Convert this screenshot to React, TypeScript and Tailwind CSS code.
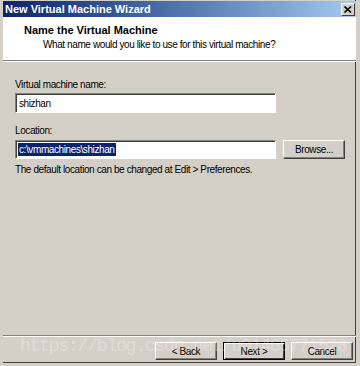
export default function App() {
  const font = { fontFamily: '"Liberation Sans", Arial, sans-serif' };
  const raised =
    "flex items-center justify-center border border-t-white border-l-white border-r-[#404040] border-b-[#404040] shadow-[inset_-1px_-1px_0_#808080]";
  const sunken =
    "bg-white border border-t-[#808080] border-l-[#808080] border-b-white border-r-white shadow-[inset_1px_1px_0_#404040] flex items-center";
  return (
    <div
      className="relative w-[360px] h-[366px] bg-[#d4d0c8] border-l-[3px] border-r-[4px] border-b-[3px] border-[#d4d0c8] shadow-[inset_-1px_-1px_0_#404040] flex flex-col text-[10px] tracking-[-0.4px] text-black overflow-hidden"
      style={font}
    >
      {/* title bar */}
      <div className="h-[16px] mt-[1px] flex items-center justify-between bg-gradient-to-r from-[#0a246a] to-[#a6caf0] pl-[2px] pr-[1px]">
        <span className="text-white font-bold text-[11px] tracking-normal leading-none">New Virtual Machine Wizard</span>
        <div className="w-[14px] h-[13px] bg-[#d4d0c8] border border-t-white border-l-white border-r-[#404040] border-b-[#404040] flex items-center justify-center">
          <svg width="8" height="7" viewBox="0 0 8 7">
            <path d="M0.5 0.5 L7 6.5 M7 0.5 L0.5 6.5" stroke="#000" strokeWidth="1.6" />
          </svg>
        </div>
      </div>

      {/* header */}
      <div className="h-[44px] bg-white border-b border-[#808080] shadow-[0_1px_0_#fff] pl-[21px] pt-[6px]">
        <div className="font-bold text-[11px] tracking-normal leading-[14px]">Name the Virtual Machine</div>
        <div className="pl-[19px] leading-[14px] mt-[1px]">What name would you like to use for this virtual machine?</div>
      </div>

      {/* body */}
      <div className="flex-1 flex flex-col pl-[12px] pt-[17px]">
        <div className="leading-[13px] mb-[2px]">Virtual machine name:</div>
        <div className={`w-[261px] h-[20px] pl-[3px] ${sunken}`}>shizhan</div>
        <div className="leading-[13px] mt-[11px] mb-[3px]">Location:</div>
        <div className="flex items-center gap-[7px]">
          <div className={`w-[261px] h-[19px] pl-[2px] ${sunken}`}>
            <span className="bg-[#0a246a] text-white leading-[13px] px-[1px]">c:\vmmachines\shizhan</span>
          </div>
          <div className={`w-[62px] h-[19px] ${raised}`}>Browse...</div>
        </div>
        <div className="mt-[4px] leading-[13px]">The default location can be changed at Edit &gt; Preferences.</div>
      </div>

      {/* footer */}
      <div className="h-[28px] border-t border-[#808080] shadow-[inset_0_1px_0_#fff] flex items-start justify-end pr-[3px] pt-[6px] gap-[6px]">
        <div className={`w-[62px] h-[18px] ${raised}`}>&lt; Back</div>
        <div className="w-[62px] h-[18px] flex items-center justify-center border border-black shadow-[inset_1px_1px_0_#fff,inset_-1px_-1px_0_#404040]">
          Next &gt;
        </div>
        <div className={`w-[62px] h-[18px] ${raised}`}>Cancel</div>
      </div>

      {/* watermark */}
      <div
        className="absolute left-[17px] top-[337px] text-[18px] leading-none tracking-[-1.2px] text-white/30 pointer-events-none whitespace-nowrap"
        style={{ fontFamily: '"Liberation Mono", "Courier New", monospace' }}
      >
        https://blog.csdn.net/u01465771528
      </div>
    </div>
  );
}
